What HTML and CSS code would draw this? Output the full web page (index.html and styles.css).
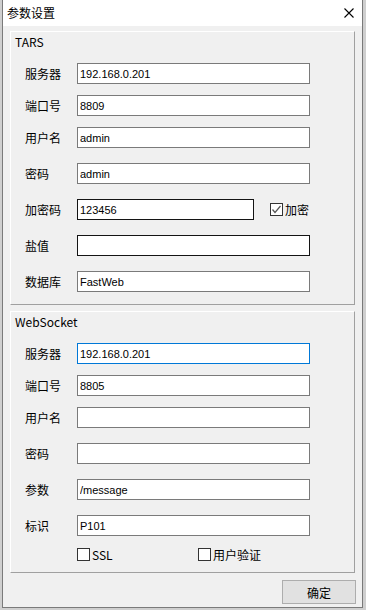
FILE: index.html
```html
<!DOCTYPE html>
<html lang="zh-CN">
<head>
    <meta charset="UTF-8">
    <meta name="viewport" content="width=device-width, initial-scale=1.0">
    <title>参数设置</title>
    <link rel="stylesheet" href="styles.css">
</head>
<body>
    <div class="window">
        <div class="titlebar">
            <span class="title">参数设置</span>
            <svg class="close" width="10" height="10" viewBox="0 0 10 10">
                <path d="M0.5 0.5 L9.5 9.5 M9.5 0.5 L0.5 9.5" stroke="#000" stroke-width="1.1" fill="none"/>
            </svg>
        </div>

        <div class="panel">
            <div class="panel-title">TARS</div>
            <div class="row"><span class="label">服务器</span><input class="field" type="text" value="192.168.0.201"></div>
            <div class="row"><span class="label">端口号</span><input class="field" type="text" value="8809"></div>
            <div class="row"><span class="label">用户名</span><input class="field" type="text" value="admin"></div>
            <div class="row wide"><span class="label">密码</span><input class="field" type="text" value="admin"></div>
            <div class="row wide">
                <span class="label">加密码</span><input class="field short dark" type="text" value="123456">
                <span class="check encrypt">
                    <span class="box"><svg width="11" height="11" viewBox="0 0 11 11"><path d="M1.5 5.5 L4 8.5 L9.5 2" stroke="#555" stroke-width="1.2" fill="none"/></svg></span>
                    <span>加密</span>
                </span>
            </div>
            <div class="row wide"><span class="label">盐值</span><input class="field dark" type="text" value=""></div>
            <div class="row wide"><span class="label">数据库</span><input class="field" type="text" value="FastWeb"></div>
        </div>

        <div class="panel second">
            <div class="panel-title">WebSocket</div>
            <div class="row"><span class="label">服务器</span><input class="field focus" type="text" value="192.168.0.201"></div>
            <div class="row"><span class="label">端口号</span><input class="field" type="text" value="8805"></div>
            <div class="row"><span class="label">用户名</span><input class="field" type="text" value=""></div>
            <div class="row wide"><span class="label">密码</span><input class="field" type="text" value=""></div>
            <div class="row wide"><span class="label">参数</span><input class="field" type="text" value="/message"></div>
            <div class="row wide"><span class="label">标识</span><input class="field" type="text" value="P101"></div>
            <div class="check-row">
                <span class="check ssl"><span class="box"></span><span>SSL</span></span>
                <span class="check"><span class="box"></span><span>用户验证</span></span>
            </div>
        </div>

        <div class="footer">
            <button class="ok">确定</button>
        </div>
    </div>
</body>
</html>
```

FILE: styles.css
```css
* {
    margin: 0;
    padding: 0;
    box-sizing: border-box;
}

body {
    font-family: "Noto Sans CJK SC", "Noto Sans", sans-serif;
    font-size: 12px;
    color: #000;
    background-color: #cfcfcf;
    height: 610px;
    overflow: hidden;
}

.window {
    margin-left: 2px;
    width: 361px;
    height: 608px;
    background-color: #f0f0f0;
    border: 1px solid #7a7a7a;
    border-top: none;
}

.titlebar {
    height: 26px;
    background-color: #fff;
    display: flex;
    align-items: center;
    justify-content: space-between;
    padding: 0 8px 0 4px;
}

.title {
    line-height: 26px;
}

.close {
    display: block;
    margin-top: -1px;
}

.panel {
    margin: 5px 7px 0;
    border-top: 1px solid #fff;
    border-left: 1px solid #fff;
    border-right: 1px solid #a0a0a0;
    border-bottom: 1px solid #a0a0a0;
    padding-bottom: 12px;
}

.panel.second {
    margin-top: 6px;
    padding-bottom: 11px;
}

.panel-title {
    height: 20px;
    line-height: 20px;
    padding-left: 4px;
}

.row {
    display: flex;
    align-items: center;
    height: 21px;
    margin-top: 11px;
    padding-left: 14px;
}

.row.wide {
    margin-top: 15px;
}

.label {
    width: 52px;
    line-height: 21px;
}

.field {
    width: 233px;
    height: 21px;
    border: 1px solid #7a7a7a;
    background-color: #fff;
    padding-left: 2px;
    font-family: "Liberation Sans", Arial, sans-serif;
    font-size: 11px;
    color: #000;
    outline: none;
}

.field.short {
    width: 177px;
}

.field.dark {
    border-color: #141414;
}

.field.focus {
    border-color: #0078d7;
}

.check {
    display: flex;
    align-items: center;
    height: 14px;
}

.check .box {
    width: 13px;
    height: 13px;
    border: 1px solid #333;
    background-color: #fff;
    margin-right: 2px;
    display: flex;
    align-items: center;
    justify-content: center;
}

.check .box svg {
    display: block;
}

.check.encrypt {
    margin-left: 16px;
}

.check-row {
    display: flex;
    align-items: center;
    height: 14px;
    margin-top: 11px;
    padding-left: 66px;
}

.check.ssl {
    width: 121px;
}

.footer {
    display: flex;
    justify-content: flex-end;
    padding: 7px 6px 0 0;
}

.ok {
    width: 74px;
    height: 24px;
    background-color: #e1e1e1;
    border: 1px solid #adadad;
    font-family: "Noto Sans CJK SC", sans-serif;
    font-size: 12px;
    color: #000;
}
```
